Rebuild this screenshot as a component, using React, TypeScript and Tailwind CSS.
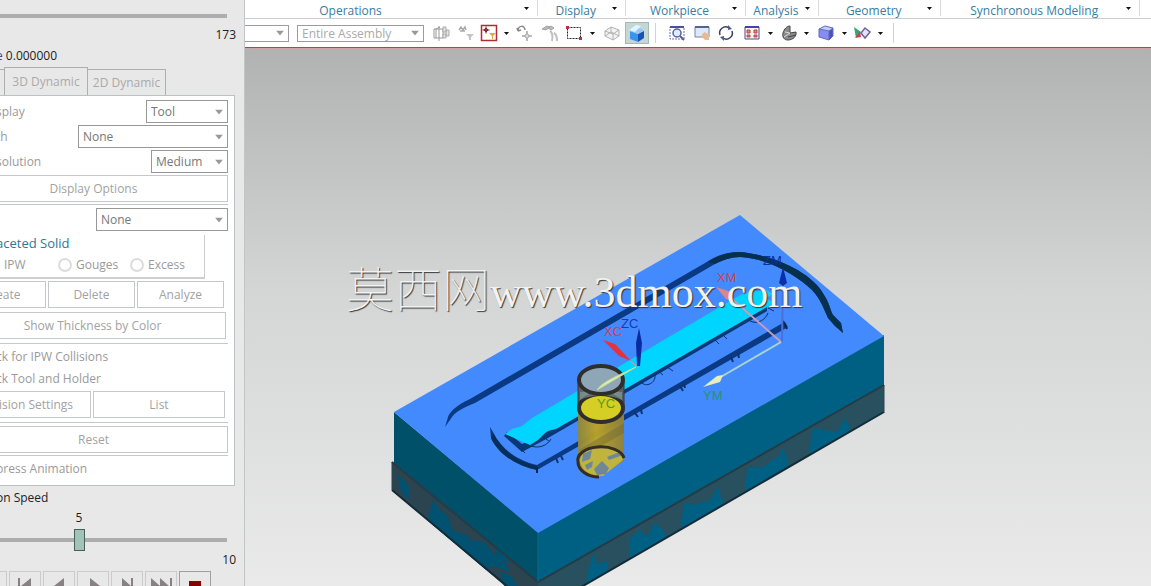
import type { ReactNode } from 'react';

type SelectProps = { id: string; value: string; width: string; tone?: string; label?: string };

function Caret({ className = '' }: { className?: string }) {
  return (
    <svg width="8" height="5" viewBox="0 0 8 5" className={className} aria-hidden="true">
      <path d="M0 0h8L4 5z" fill="currentColor" />
    </svg>
  );
}

function PanelSelect({ id, value, width, tone = 'h-[23px] border-[#989898] text-[#777]', label }: SelectProps) {
  return (
    <div className={`relative shrink-0 ${width}`}>
      <select
        id={id}
        aria-label={label}
        defaultValue={value}
        className={`block w-full appearance-none border bg-white pl-1 pr-4 text-[12px] leading-4 outline-none ${tone}`}
      >
        <option>{value}</option>
      </select>
      <Caret className="pointer-events-none absolute right-[5px] top-1/2 -translate-y-1/2 text-[#999]" />
    </div>
  );
}

function PanelButton({ children, className = '' }: { children: ReactNode; className?: string }) {
  return (
    <button className={`h-[27px] border border-[#c4c8ca] bg-white text-[12px] leading-4 text-[#a2a2a2] ${className}`}>
      {children}
    </button>
  );
}

function Rule() {
  return <div className="mr-[6px] h-px bg-[#c4c8ca]" />;
}

function SpeedSlider({ label, min, max, value, thumb }: { label: string; min: number; max: number; value: number; thumb?: boolean }) {
  return (
    <input
      type="range"
      aria-label={label}
      min={min}
      max={max}
      defaultValue={value}
      className={`-ml-10 block w-[267px] appearance-none bg-transparent [&::-webkit-slider-runnable-track]:h-[4px] [&::-webkit-slider-runnable-track]:bg-[#adadad] [&::-webkit-slider-thumb]:-mt-[9px] [&::-webkit-slider-thumb]:h-[22px] [&::-webkit-slider-thumb]:w-[11px] [&::-webkit-slider-thumb]:appearance-none [&::-webkit-slider-thumb]:border [&::-webkit-slider-thumb]:border-[#46605a] [&::-webkit-slider-thumb]:bg-[#a3c3b9] ${thumb ? 'h-[22px]' : 'h-[4px]'}`}
    />
  );
}

const playback = [
  { name: 'Previous operation', d: 'M2 6h2v14H2zM18 6v14L6 13z' },
  { name: 'Step back', d: 'M8 6h2v14H8zM21 6v14L11 14z' },
  { name: 'Play backwards', d: 'M20 6v14L10 14z' },
  { name: 'Play', d: 'M12 6v14l10-6z' },
  { name: 'Step forward', d: 'M10 6v14l9-6zM19 6h2v14h-2z' },
  { name: 'Next operation', d: 'M5 6v14l9-6zM14 6v14l9-6zM24 6h2v14h-2z' },
];

function SidePanel() {
  return (
    <aside className="flex w-[245px] shrink-0 flex-col overflow-hidden border-r border-[#c2c5c8] bg-[#e8e8e8] text-[12px] leading-4">
      <div className="pt-[14px]">
        <SpeedSlider label="Motion position" min={0} max={173} value={0} />
      </div>
      <div className="mt-[9px] pr-2 text-right text-[#222]">173</div>
      <div className="-ml-1 mt-[5px] text-[#222]"><span className="text-[#4b4675]">e</span> 0.000000</div>

      <div className="mt-[3px] flex h-[28px] items-end text-[#aaa]" role="tablist">
        <div className="h-[26px] w-[4px] border-t border-[#aeaeae]" />
        <button role="tab" aria-selected="true" className="h-[28px] w-[84px] border border-b-0 border-[#aeaeae]">3D Dynamic</button>
        <button role="tab" aria-selected="false" className="h-[26px] w-[78px] border border-b-0 border-l-0 border-[#aeaeae]">2D Dynamic</button>
      </div>

      <div className="mr-[9px] flex h-[391px] shrink-0 flex-col border-b border-r border-t border-[#bcc2c4] bg-white text-[#9a9a9a]">
        <div className="mt-1 flex flex-col gap-[2px] pr-[6px]">
          <div className="flex items-center justify-between"><label htmlFor="display" className="-ml-1">splay</label><PanelSelect id="display" value="Tool" width="w-[82px]" /></div>
          <div className="flex items-center justify-between"><label htmlFor="path" className="-ml-1">th</label><PanelSelect id="path" value="None" width="w-[150px]" /></div>
          <div className="flex items-center justify-between"><label htmlFor="resolution" className="-ml-1">solution</label><PanelSelect id="resolution" value="Medium" width="w-[77px]" /></div>
        </div>
        <PanelButton className="mr-[6px] mt-[2px] border-l-0 pr-[40px]">Display Options</PanelButton>
        <div className="mt-[2px]"><Rule /></div>
        <div className="mt-[3px] flex justify-end pr-[6px]">
          <PanelSelect id="ipw" label="IPW" value="None" width="w-[132px]" />
        </div>

        <fieldset className="mr-[29px] mt-1 h-[44px] border-b-2 border-r border-[#cfcfcf]">
          <div className="-ml-1 text-[13px] leading-4 text-[#2b7799]">aceted Solid</div>
          <div className="mt-[6px] flex items-center">
            <label htmlFor="type-ipw" className="w-[58px] pl-1">IPW</label>
            <input id="type-gouges" name="solid" type="radio" className="h-[14px] w-[14px] appearance-none rounded-full border-2 border-[#dcdcdc]" />
            <label htmlFor="type-gouges" className="w-[58px] pl-1">Gouges</label>
            <input id="type-excess" name="solid" type="radio" className="h-[14px] w-[14px] appearance-none rounded-full border-2 border-[#dcdcdc]" />
            <label htmlFor="type-excess" className="pl-1">Excess</label>
          </div>
        </fieldset>

        <div className="mt-[2px] flex gap-[2px] pr-[10px]">
          <PanelButton className="w-[46px] border-l-0 text-left"><span className="-ml-1">eate</span></PanelButton>
          <PanelButton className="flex-1">Delete</PanelButton>
          <PanelButton className="flex-1">Analyze</PanelButton>
        </div>
        <PanelButton className="mr-2 mt-1 border-l-0 pr-[40px]">Show Thickness by Color</PanelButton>
        <div className="mt-1"><Rule /></div>
        <div className="-ml-1 mt-[5px]">ck for IPW Collisions</div>
        <div className="-ml-1 mt-[6px]">ck Tool and Holder</div>
        <div className="mt-1 flex gap-[2px] pr-[9px]">
          <PanelButton className="w-[91px] border-l-0 text-left"><span className="-ml-1">lision Settings</span></PanelButton>
          <PanelButton className="flex-1">List</PanelButton>
        </div>
        <div className="mt-1"><Rule /></div>
        <PanelButton className="mr-[6px] mt-[3px] border-l-0 pr-[40px]">Reset</PanelButton>
        <div className="mt-[2px]"><Rule /></div>
        <div className="-ml-1 mt-[5px]">press Animation</div>
      </div>

      <div className="-ml-1 mt-1 text-[#222]">on Speed</div>
      <div className="mt-1 w-[158px] text-center text-[#222]">5</div>
      <div className="mt-[3px]">
        <SpeedSlider label="Animation Speed" min={1} max={10} value={5} thumb />
      </div>
      <div className="mt-px pr-2 text-right text-[#222]">10</div>
      <div className="-ml-[25px] mt-[3px] flex gap-[2px]">
        {playback.map((b) => (
          <button key={b.name} aria-label={b.name} className="h-[28px] w-[32px] shrink-0 border border-[#cbcbcb] text-[#888083]">
            <svg width="30" height="26" viewBox="0 0 30 26" fill="currentColor"><path d={b.d} /></svg>
          </button>
        ))}
        <button aria-label="Stop" className="h-[28px] w-[32px] shrink-0 border border-[#9f9f9f]">
          <svg width="30" height="26" viewBox="0 0 30 26"><path d="M9 9h12v10H9z" fill="#8a0000" /></svg>
        </button>
      </div>
    </aside>
  );
}

const groups = [
  { name: 'Operations', size: 'grow-[294]', pad: 'pr-[81px]' },
  { name: 'Display', size: 'grow-[88]', pad: 'pr-3' },
  { name: 'Workpiece', size: 'grow-[119]', pad: 'pr-3' },
  { name: 'Analysis', size: 'grow-[73]', pad: 'pr-3' },
  { name: 'Geometry', size: 'grow-[122]', pad: 'pr-3' },
  { name: 'Synchronous Modeling', size: 'grow-[199]', pad: 'pr-3' },
];

function Ribbon() {
  return (
    <div className="flex h-[19px] border-b border-[#c9cdcf] bg-white pr-[11px] text-[12px] leading-4 text-[#3a7ca0]">
      {groups.map((g) => (
        <button key={g.name} className={`relative h-4 min-w-0 basis-0 whitespace-nowrap border-r border-[#dadada] pt-[3px] ${g.size}`}>
          <span className={`block text-center ${g.pad}`}>{g.name}</span>
          <svg width="5" height="3" viewBox="0 0 5 3" className="absolute right-2 top-[7px]"><path d="M0 0h5L2.500 3z" fill="#111" /></svg>
        </button>
      ))}
    </div>
  );
}

function Tool({ name, className = '', children }: { name: string; className?: string; children: ReactNode }) {
  return (
    <button aria-label={name} className={`flex h-[22px] shrink-0 items-center justify-center ${className}`}>
      <svg width="18" height="18" viewBox="0 0 18 18" fill="none">{children}</svg>
    </button>
  );
}

function Drop({ name, className = '' }: { name: string; className?: string }) {
  return (
    <button aria-label={name} className={`flex h-[22px] w-[10px] shrink-0 items-center justify-center ${className}`}>
      <svg width="5" height="3" viewBox="0 0 5 3"><path d="M0 0h5L2.500 3z" fill="#111" /></svg>
    </button>
  );
}

function Toolbar() {
  return (
    <div className="flex h-[28px] items-center overflow-hidden bg-white">
      <PanelSelect id="filter" label="Selection filter" value="" width="w-[44px]" tone="h-[17px] border-l-0 border-[#9c9c9c] text-[#aaa]" />
      <div className="w-2 shrink-0" />
      <PanelSelect id="scope" label="Selection scope" value="Entire Assembly" width="w-[127px]" tone="h-[17px] border-[#9c9c9c] text-[#aaa]" />
      <Tool name="Select in assembly" className="ml-2 w-5">
        <path d="M6 2v15M1 5h9v9H1zM3 14V5l4-2" stroke="#999" />
        <path d="M10 3h3v5h-3zM13 6h3v6h-3zM10 10h3v4h-3z" stroke="#aaa" fill="#e4e4e4" />
      </Tool>
      <Tool name="Selection filter reset" className="ml-1 w-5">
        <path d="M2 6l2-3 2 3 2-3 1 3M3 7h5" stroke="#aaa" strokeWidth="1.500" />
        <path d="M9 10h8l-3 3v3h-2v-3z" fill="#c4c4c4" />
      </Tool>
      <Tool name="General selection filters" className="ml-[3px] w-5">
        <path d="M1.500 1.500h15v15h-15z" fill="#fff" stroke="#b02b38" strokeWidth="1.500" />
        <path d="M6 2.500v7M2.500 6h7" stroke="#6c1722" /><circle cx="6" cy="6" r="1.500" stroke="#6c1722" />
        <path d="M9 9h7l-3 3v3h-1v-3z" fill="#e8a73d" />
      </Tool>
      <Drop name="Filter options" className="ml-[2px]" />
      <Tool name="Snap move" className="ml-1 w-5">
        <path d="M2 7c0-6 7-6 7-1M2 7l-1-3M2 7l3-1" stroke="#888" strokeWidth="1.500" />
        <path d="M11 7v10M6 12h10" stroke="#777" /><circle cx="11" cy="12" r="2" fill="#ddd" stroke="#aaa" />
      </Tool>
      <Tool name="Highlight hidden" className="ml-[5px] w-5">
        <path d="M1 5l5-3 3 1-4 3zM7 4l3-2 3 2-3 2z" fill="#bbb" stroke="#a4a4a4" />
        <path d="M9 7c2 1 3 4 2 10M13 9c2 1 3 3 3 8" stroke="#c0c0c0" strokeWidth="2" />
      </Tool>
      <Tool name="Rectangle selection" className="ml-1 w-5">
        <path d="M2.500 3.500h13v11h-13z" stroke="#222" strokeDasharray="2 1" />
        <path d="M1 2h3v3H1zM14 13h3v3h-3z" fill="#b33442" />
      </Tool>
      <Drop name="Selection shape" className="ml-[3px]" />
      <Tool name="Wireframe" className="ml-[5px] w-5">
        <path d="M2 7l6-4 8 3v6l-6 4-8-4zM2 7l8 3v6M10 10l6-4M8 3v5l-6 4M8 8l8 4" stroke="#b0b0b0" fill="#f4f4f4" />
      </Tool>
      <button aria-label="Shaded" className="ml-[3px] flex h-[22px] w-6 shrink-0 items-center justify-center border border-[#9ebbb4] bg-[#c5d6d3]">
        <svg width="20" height="20" viewBox="0 0 20 20"><path d="M3 8l8 3v8l-8-3z" fill="#3b94ec" /><path d="M11 11l6-3v7l-6 4z" fill="#1652b9" /><path d="M3 8l6-4 8 3-6 4z" fill="#8fcafb" /><path d="M2 7l7-5 5 1-6 6z" fill="#e2f4ff" /></svg>
      </button>
      <div className="ml-[6px] h-5 w-px shrink-0 bg-[#d2d2d2]" />
      <Tool name="Fit" className="ml-[11px] w-5">
        <path d="M2 3h14v12H2z" stroke="#6a70ad" strokeDasharray="2 1" /><path d="M2 3h14" stroke="#4a4f9e" strokeWidth="2" /><circle cx="9" cy="9" r="4" fill="#dcecff" stroke="#5a619c" strokeWidth="1.500" /><path d="M12 12l4 4" stroke="#58609c" strokeWidth="2" />
      </Tool>
      <Tool name="Pan" className="ml-[5px] w-5">
        <path d="M2 3h14v10H2z" fill="#dbe9fa" stroke="#7784a2" /><path d="M2 3h14" stroke="#52648f" strokeWidth="2" /><path d="M9 10l3-2 4 3v5h-4l-3-3z" fill="#e9b994" />
      </Tool>
      <Tool name="Rotate view" className="ml-1 w-5">
        <path d="M3 11a6 6 0 0 1 9-7M15 7a6 6 0 0 1-9 7" stroke="#35415f" strokeWidth="1.500" /><path d="M11 1l4 4-4 1zM7 17l-4-4 4-1z" fill="#4a5f91" />
      </Tool>
      <Tool name="Layout" className="ml-[6px] w-5">
        <path d="M2 3h14v12H2z" fill="#fff6f4" stroke="#4c4888" /><path d="M2 3h14" stroke="#4742a2" strokeWidth="2" /><path d="M4 6h3v3H4zM11 6h3v3h-3zM4 11h3v2H4zM11 11h3v2h-3z" fill="#e08a80" stroke="#b8434c" />
      </Tool>
      <Drop name="Layout options" className="ml-[3px]" />
      <Tool name="Section" className="ml-1 w-5">
        <path d="M3 9c1-4 4-7 7-7v7l6-1c1 4-3 8-8 8-4 0-6-3-5-7z" fill="#8b8b8b" stroke="#444" /><path d="M10 9l-6 4M10 9l-5-1" stroke="#d7d7d7" /><path d="M8 13l8-2" stroke="#444" />
      </Tool>
      <Drop name="Section options" className="ml-[2px]" />
      <Tool name="Orient view" className="ml-[5px] w-5">
        <path d="M2 5l6-3 8 2-4 3z" fill="#c4cbff" /><path d="M2 5l10 2v9L2 13z" fill="#858df0" /><path d="M12 7l4-3v8l-4 4z" fill="#4a52b6" /><path d="M2 5l6-3 8 2v8l-4 4-10-3zM2 5l10 2v9M12 7l4-3" stroke="#6269c2" />
      </Tool>
      <Drop name="Orient options" className="ml-[3px]" />
      <Tool name="Analysis view" className="ml-[3px] w-5">
        <path d="M1 3l7 5-5 6z" fill="#38a47a" /><path d="M2 14l5-7 1 6z" fill="#c84352" /><path d="M12 4l5 4-5 6-4-5z" fill="#e4e5fa" stroke="#70659e" strokeWidth="1.500" />
      </Tool>
      <Drop name="Analysis options" className="ml-[3px]" />
      <div className="ml-2 h-5 w-px shrink-0 bg-[#d2d2d2]" />
    </div>
  );
}

function Scene() {
  return (
    <svg viewBox="245 49 906 537" preserveAspectRatio="xMinYMin slice" className="block h-full w-full" aria-label="Tool path simulation">
      <defs>
        <linearGradient id="gold" x1="0" x2="1"><stop offset="0" stopColor="#8e873d" /><stop offset=".4" stopColor="#bda324" /><stop offset="1" stopColor="#8f8138" /></linearGradient>
        <linearGradient id="steel" x1="0" x2="1"><stop offset="0" stopColor="#505b60" /><stop offset=".5" stopColor="#8f9f9c" /><stop offset="1" stopColor="#54595c" /></linearGradient>
        <clipPath id="baseLeft"><path d="M392 462l146 120v32L392 490z" /></clipPath>
        <clipPath id="baseRight"><path d="M538 582l346-197v27L538 612z" /></clipPath>
      </defs>

      <path d="M392 462l146 120v32L392 490z" fill="#2b4450" />
      <path d="M538 582l346-197v27L538 612z" fill="#28505e" />
      <g clipPath="url(#baseLeft)" fill="#005270">
        <path d="M396 474l3 6 2 12 9 8 0-12-6-8zM433 500l6 9 9 7 4 14 16 6 6 14 14 8-2 14-50-42-8-14zM470 540l14 2 10 12 8 2 8 16-18-6-12 8zM500 571l12 6 6 10h-14zM426 484l20 14 6 10-14-6zM494 546l10 8 6 8-12-4z" />
      </g>
      <g clipPath="url(#baseRight)" fill="#006084">
        <path d="M584 592l4-20 5-19 4 11 10-3 2 26zM630 538l10-8 7 7 8-14 8 7 4 8-37 26zM682 517l3-15 8 3 17-5 8-13 5 15-1 8-40 26zM745 483l3-15 15-1 17-12 3-8 5 15-2 8-41 26zM810 445l3-17 24 4 8-14 5 9-1 8-39 26z" />
      </g>
      <path d="M392 490l146 122L884 412" fill="none" stroke="#132c38" strokeWidth="2" />
      <path d="M884 385v28M392 462v28" stroke="#264753" />
      <path d="M394 412l144 120v50L394 463z" fill="#00506a" />
      <path d="M538 532l346-197v50L538 582z" fill="#006083" />
      <path d="M392 462l146 120 346-197" fill="none" stroke="#253b45" strokeWidth="2" />
      <path d="M740 215l144 121-346 197-144-121z" fill="#448aff" />
      <path d="M538 533v49" stroke="#0a6a8c" />

      <path d="M445 427l3-10c2-5 7-11 22-18L705 263c12-8 22-11 35-11 26 2 70 17 84 43 6 9 6 15 9 20l8 8 2 10-8-7-7-8c-4-9-8-20-16-28-15-15-45-32-72-33-9 0-17 3-25 7L475 403c-12 5-20 9-23 14z" fill="#0a3a84" />
      <path d="M708 262c10-7 20-10 32-10 26 2 70 17 84 43 6 9 6 15 9 20l8 8 2 10-8-7-7-8c-4-9-8-20-16-28-15-15-45-32-72-33-9 0-17 3-25 7z" fill="#07304f" />

      <path d="M490 427l3 5c9 18 24 28 44 33l244-141 4-2 3 5-7 4L537 470c-20-4-38-15-46-32z" fill="#0b3a84" />
      <path d="M493 433c9 18 24 28 44 33v4c-20-4-38-15-46-32z" fill="#072f58" />
      <path d="M537 467v6M783 321l4 8" stroke="#0b274f" strokeWidth="2" />
      <path d="M556 458l2 5M561 456l2 4M635 413l3 4M641 410l1 4M680 386l3 5M684 384l1 4M731 357l2 5M738 353l1 5" stroke="#10316b" strokeWidth="2" />

      <path d="M504 436l3-4 15 12 25-12 220-128v7L548 438l-26 14z" fill="#073976" />
      <path d="M505 434l7-5 10-3 10-8L640 354l97-57c9-7 19-4 28-8l8 5-7 4 8 5-7 4-190 110-21 12-9 2-9 9-8 5z" fill="#00d5ff" />
      <path d="M531 446c8 3 17-1 20-7M641 382c5 6 15 1 14-7M750 321c8 4 16-2 18-8" fill="none" stroke="#0a3168" />
      <path d="M520 448l5 5M543 437l6 4M658 371l5 4M667 367l6 4M715 340l4 4M723 335l4 4M768 308l6 3" stroke="#0d3275" />

      <path d="M578 408v54a23 15 0 0 0 20 15l26-16v-53z" fill="url(#gold)" opacity=".96" />
      <path d="M579 450l45-27v10l-42 24z" fill="#6f6431" opacity=".4" />
      <path d="M580 461a21 13 0 0 1 43-1l-20 16c-13 0-22-6-23-15z" fill="#c0b43e" />
      <path d="M583 454l9-4-2 9-8 3zM602 461l-8 8 3 6 9-1 3-6zM607 457l15-6 1 4-14 5zM585 465l8-4-1 6-5 3z" fill="#6f8898" />
      <path d="M624 458a23 13 0 0 0-46 4c0 8 9 15 21 15" fill="none" stroke="#332e20" strokeWidth="3" />
      <path d="M578 381v27a23 15 0 0 0 46 0v-27z" fill="url(#steel)" />
      <ellipse cx="601" cy="408" rx="22" ry="14" fill="#d5ce24" stroke="#302e2d" strokeWidth="4" />
      <path d="M580 392h42v8c-12 -6-31 -6-42 0z" fill="#8ba6a3" opacity=".55" />
      <ellipse cx="601" cy="380" rx="22" ry="14" fill="#8ea6b5" stroke="#302e2d" strokeWidth="4" />
      <path d="M578 381v30M624 381v30" stroke="#393731" />

      <path d="M636 367L597 390c4-6 12-10 20-14z" fill="#d8efb2" stroke="#c7dd98" />
      <path d="M639 368l-10-8" stroke="#ff8892" />
      <path d="M603 340l12 4 16 17-12-5z" fill="#e6323d" />
      <path d="M639 328l3 15-2 23h-3l-1-23z" fill="#0a2ba0" />

      <path d="M783 280l-1 62" stroke="#4e6fd5" strokeWidth="2" />
      <path d="M783 267l4 16-4 3-4-3z" fill="#0b2faa" />
      <path d="M781 342l-50-44" stroke="#c99bb9" strokeWidth="2" />
      <path d="M716 287l15 5 2 9-7-2z" fill="#e28385" />
      <path d="M781 342l-62 36" stroke="#a9d5d1" strokeWidth="2" />
      <path d="M703 387l14-11 6-1-3 7z" fill="#e6efbd" />

      <g fontFamily="Liberation Sans, Arial, sans-serif" fontSize="13">
        <text x="604" y="336" fill="#d43c59">XC</text>
        <text x="621" y="328" fill="#123bb3">ZC</text>
        <text x="597" y="408" fill="#579b21">YC</text>
        <text x="717" y="282" fill="#dc3b5b">XM</text>
        <text x="763" y="265" fill="#0c309d">ZM</text>
        <text x="703" y="400" fill="#249273">YM</text>
      </g>
    </svg>
  );
}

export default function App() {
  return (
    <div className="flex h-screen overflow-hidden bg-white font-['Open_Sans','Noto_Sans_CJK_SC',sans-serif]">
      <SidePanel />
      <main className="flex min-w-0 flex-1 flex-col">
        <Ribbon />
        <Toolbar />
        <div className="h-[2px] shrink-0 border-b border-[#cda5a5] bg-[#a34a4e]" />
        <section className="relative min-h-0 flex-1 overflow-hidden bg-linear-to-b from-[#b1b3b3] via-[#d4d5d5] via-45% to-[#eaeaea]">
          <Scene />
          <div className="absolute left-[101px] top-[202px] flex items-baseline whitespace-nowrap text-[#f2f2f2] [text-shadow:1px_1px_1px_#333]">
            <span className="font-['Noto_Sans_CJK_SC',sans-serif] text-[48px] font-thin leading-[70px]">莫西网</span>
            <span className="font-['Liberation_Serif',serif] text-[44px] leading-[70px]">www.3dmox.com</span>
          </div>
        </section>
      </main>
    </div>
  );
}
